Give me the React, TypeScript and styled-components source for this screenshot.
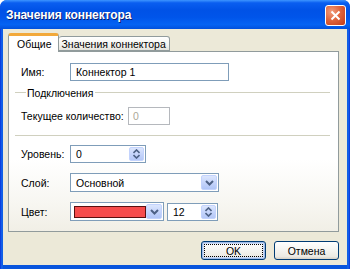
import { FC, ReactElement } from 'react';
import styled, { createGlobalStyle } from 'styled-components';

const GlobalStyle = createGlobalStyle`
  html, body {
    margin: 0;
    padding: 0;
    background: #ffffff;
  }
  body {
    font-family: "Liberation Sans", Arial, sans-serif;
    font-size: 10.5px;
    color: #000000;
  }
`;

const Window = styled.div`
  width: 350px;
  height: 269px;
  display: flex;
  flex-direction: column;
  box-sizing: border-box;
  border-radius: 7px 7px 0 0;
  overflow: hidden;
  background: linear-gradient(to right, #0831d9 0, #166aee 2px, #0855dd 3px, #0855dd 347px, #166aee 348px, #0831d9 350px);
`;

const TitleBar = styled.div`
  height: 29px;
  flex: none;
  display: flex;
  align-items: center;
  justify-content: space-between;
  padding: 0 4px 0 6px;
  background: linear-gradient(
    to bottom,
    #3d95ff 0%,
    #0a5ef0 10%,
    #0052e6 35%,
    #0055ea 60%,
    #0563f3 85%,
    #0150dc 100%
  );
`;

const Title = styled.div`
  color: #ffffff;
  font-weight: bold;
  font-size: 12px;
  letter-spacing: -0.1px;
  text-shadow: 1px 1px 0 #0a1e6e;
`;

const CloseButton = styled.div`
  width: 19px;
  height: 19px;
  margin-top: 1px;
  border: 1px solid #ffffff;
  border-radius: 3px;
  display: flex;
  align-items: center;
  justify-content: center;
  background: radial-gradient(circle at 30% 30%, #f19d7d 0%, #e0663e 45%, #c23a16 100%);
`;

const Body = styled.div`
  flex: 1;
  margin: 0 3px 4px 3px;
  padding: 4px 8px 0 5px;
  background: #ece9d8;
  display: flex;
  flex-direction: column;
`;

const TabStrip = styled.div`
  display: flex;
  align-items: flex-end;
  height: 18px;
  position: relative;
  z-index: 1;
`;

const Tab = styled.div<{ $active?: boolean }>`
  box-sizing: border-box;
  height: ${({ $active }) => ($active ? '19px' : '15px')};
  margin-bottom: ${({ $active }) => ($active ? '-1px' : '0')};
  padding: ${({ $active }) => ($active ? '2px 6px 0 8px' : '1px 3px 0 3px')};
  border: 1px solid #919b9c;
  border-bottom: ${({ $active }) => ($active ? 'none' : '1px solid #919b9c')};
  border-left: ${({ $active }) => ($active ? '1px solid #919b9c' : 'none')};
  border-top: ${({ $active }) => ($active ? '3px solid #f2a93b' : '1px solid #919b9c')};
  border-radius: 3px 3px 0 0;
  background: ${({ $active }) =>
    $active ? '#ffffff' : 'linear-gradient(to bottom, #ffffff 0%, #f3f3ef 60%, #e4e3dc 100%)'};
  white-space: nowrap;
  line-height: 12px;
`;

const Panel = styled.div`
  box-sizing: border-box;
  height: 181px;
  border: 1px solid #919b9c;
  background: linear-gradient(to bottom, #ffffff 0%, #ffffff 60%, #f7f6f1 85%, #f1efe6 100%);
  padding: 11px 8px 0 6px;
  display: flex;
  flex-direction: column;
`;

const Row = styled.div<{ $top?: number }>`
  display: flex;
  align-items: center;
  padding-left: 6px;
  margin-top: ${({ $top }) => $top ?? 0}px;
`;

const Label = styled.div<{ $width?: number }>`
  width: ${({ $width }) => $width ?? 49}px;
  flex: none;
  white-space: nowrap;
`;

const Field = styled.div<{ $width: number; $disabled?: boolean; $height?: number; $gap?: number }>`
  box-sizing: border-box;
  width: ${({ $width }) => $width}px;
  height: ${({ $height }) => $height ?? 18}px;
  margin-left: ${({ $gap }) => $gap ?? 0}px;
  border: 1px solid ${({ $disabled }) => ($disabled ? '#b5b8bd' : '#7f9db9')};
  background: #ffffff;
  color: ${({ $disabled }) => ($disabled ? '#aca899' : '#000000')};
  display: flex;
  align-items: center;
  padding-left: ${({ $disabled }) => ($disabled ? '4px' : '5px')};
  padding-right: 1px;
  white-space: nowrap;
`;

const FieldText = styled.span`
  flex: 1;
`;

const GroupHeader = styled.div`
  display: flex;
  align-items: center;
  height: 13px;
  margin-top: 5px;
  color: #000000;

  &::before,
  &::after {
    content: '';
    height: 1px;
    background: #d0d0bf;
  }
  &::before {
    width: 11px;
    margin-right: 1px;
  }
  &::after {
    flex: 1;
    margin-left: 2px;
  }
`;

const Separator = styled.div`
  height: 1px;
  margin-top: 10px;
  background: #d0d0bf;
`;

const SpinButton = styled.div`
  box-sizing: border-box;
  width: 15px;
  height: 14px;
  border-radius: 2px;
  border: 1px solid #c3d3fd;
  background: linear-gradient(to bottom, #dce6fd 0%, #c6d5fb 50%, #b5c8f7 100%);
  display: flex;
  align-items: center;
  justify-content: center;
`;

const DropButton = styled.div`
  box-sizing: border-box;
  width: 16px;
  height: 15px;
  margin-left: auto;
  border-radius: 2px;
  border: 1px solid #c3d3fd;
  background: linear-gradient(to bottom, #dce6fd 0%, #c6d5fb 50%, #b0c5f7 100%);
  display: flex;
  align-items: center;
  justify-content: center;
`;

const Swatch = styled.div<{ $color: string }>`
  box-sizing: border-box;
  width: 72px;
  height: 12px;
  margin-left: -2px;
  border: 1px solid #5a1010;
  background: ${({ $color }) => $color};
`;

const ButtonRow = styled.div`
  display: flex;
  justify-content: flex-end;
  gap: 8px;
  margin-top: 9px;
`;

const Button = styled.div<{ $default?: boolean; $width: number }>`
  box-sizing: border-box;
  width: ${({ $width }) => $width}px;
  height: 19px;
  border: 1px solid #003c74;
  border-radius: 3px;
  background: linear-gradient(to bottom, #ffffff 0%, #f6f6f3 40%, #eceae3 85%, #d6d0c5 100%);
  box-shadow: ${({ $default }) => ($default ? 'inset 0 0 0 1px #9fbbe8, inset 0 0 0 2px #cddcf5' : 'none')};
  display: flex;
  align-items: center;
  justify-content: center;
  padding: 2px;
`;

const FocusRect = styled.div`
  flex: 1;
  align-self: stretch;
  border: 1px dotted #000000;
  display: flex;
  align-items: center;
  justify-content: center;
`;

const SpinIcon: FC = (): ReactElement => (
  <svg width="7" height="10" viewBox="0 0 7 10">
    <path d="M0.5 4 L3.5 1 L6.5 4" fill="none" stroke="#4d6185" strokeWidth="1.6" />
    <path d="M0.5 6 L3.5 9 L6.5 6" fill="none" stroke="#4d6185" strokeWidth="1.6" />
  </svg>
);

const ChevronDown: FC = (): ReactElement => (
  <svg width="9" height="6" viewBox="0 0 9 6">
    <path d="M1 1 L4.5 4.5 L8 1" fill="none" stroke="#4d6185" strokeWidth="2" />
  </svg>
);

const App: FC = (): ReactElement => {
  return (
    <>
      <GlobalStyle />
      <Window>
        <TitleBar>
          <Title>Значения коннектора</Title>
          <CloseButton>
            <svg width="11" height="11" viewBox="0 0 11 11">
              <path d="M1.5 1.5 L9.5 9.5 M9.5 1.5 L1.5 9.5" stroke="#ffffff" strokeWidth="2" />
            </svg>
          </CloseButton>
        </TitleBar>
        <Body>
          <TabStrip>
            <Tab $active>Общие</Tab>
            <Tab>Значения коннектора</Tab>
          </TabStrip>
          <Panel>
            <Row>
              <Label>Имя:</Label>
              <Field $width={159}>
                <FieldText>Коннектор 1</FieldText>
              </Field>
            </Row>
            <GroupHeader>Подключения</GroupHeader>
            <Row $top={8}>
              <Label $width={107}>Текущее количество:</Label>
              <Field $width={42} $disabled>
                <FieldText>0</FieldText>
              </Field>
            </Row>
            <Separator />
            <Row $top={9}>
              <Label>Уровень:</Label>
              <Field $width={76}>
                <FieldText>0</FieldText>
                <SpinButton>
                  <SpinIcon />
                </SpinButton>
              </Field>
            </Row>
            <Row $top={10}>
              <Label>Слой:</Label>
              <Field $width={149} $height={19}>
                <FieldText>Основной</FieldText>
                <DropButton>
                  <ChevronDown />
                </DropButton>
              </Field>
            </Row>
            <Row $top={10}>
              <Label>Цвет:</Label>
              <Field $width={94} $height={19}>
                <Swatch $color="#f64c4c" />
                <DropButton>
                  <ChevronDown />
                </DropButton>
              </Field>
              <Field $width={51} $gap={3}>
                <FieldText>12</FieldText>
                <SpinButton>
                  <SpinIcon />
                </SpinButton>
              </Field>
            </Row>
          </Panel>
          <ButtonRow>
            <Button $default $width={65}>
              <FocusRect>OK</FocusRect>
            </Button>
            <Button $width={65}>Отмена</Button>
          </ButtonRow>
        </Body>
      </Window>
    </>
  );
};

export default App;
